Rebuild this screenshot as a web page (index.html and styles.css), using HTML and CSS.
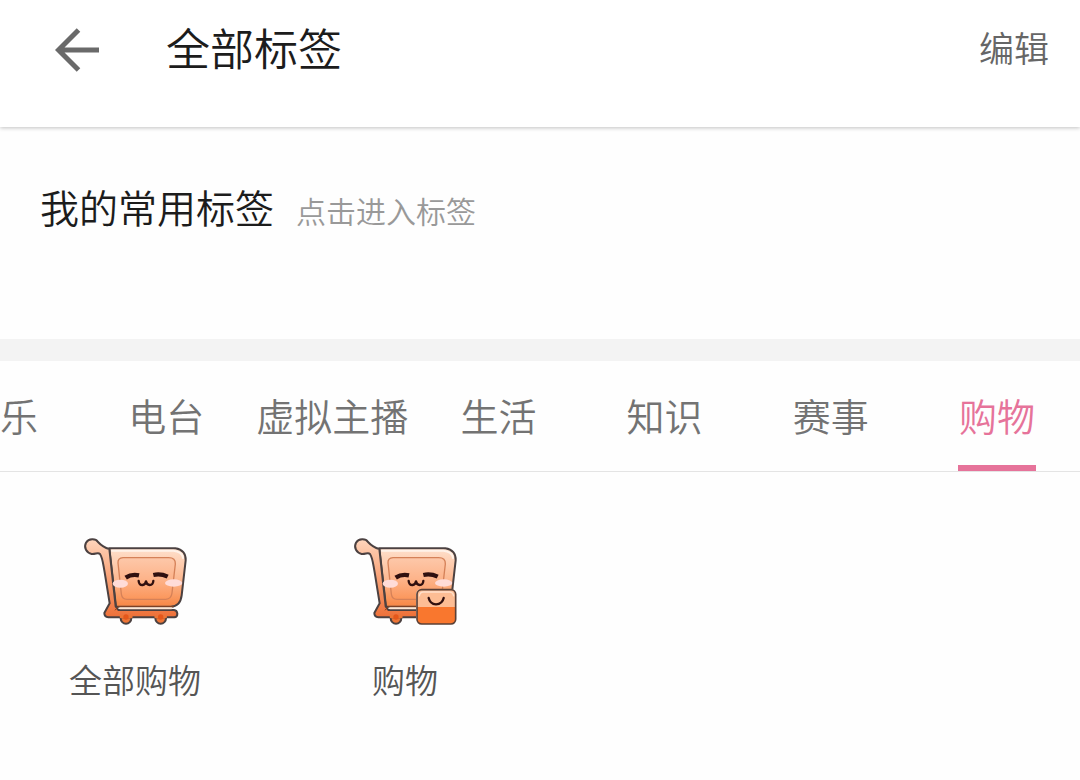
FILE: index.html
```html
<!DOCTYPE html>
<html lang="zh-CN">
<head>
<meta charset="utf-8">
<meta name="viewport" content="width=device-width, initial-scale=1">
<title>全部标签</title>
<link rel="stylesheet" href="styles.css">
</head>
<body>
<svg class="defs" aria-hidden="true">
  <defs>
    <linearGradient id="basket" x1="0" y1="0" x2="0" y2="1">
      <stop offset="0" stop-color="#ffe0cc"/>
      <stop offset=".55" stop-color="#fcb78f"/>
      <stop offset="1" stop-color="#f88643"/>
    </linearGradient>
    <linearGradient id="panel" x1="0" y1="0" x2="0" y2="1">
      <stop offset="0" stop-color="#fdc8aa"/>
      <stop offset=".5" stop-color="#fdb48b"/>
      <stop offset="1" stop-color="#fb965b"/>
    </linearGradient>
    <linearGradient id="handle" x1="0" y1="0" x2="0" y2="1">
      <stop offset="0" stop-color="#ffd6bd"/>
      <stop offset=".45" stop-color="#f9a67c"/>
      <stop offset="1" stop-color="#ee7038"/>
    </linearGradient>
    <g id="cart" stroke-linejoin="round" stroke-linecap="round">
      <path d="M118 70H316Q348 75 347 106L335 211Q331 244 302 245H138Z" fill="url(#basket)" stroke="#4b4141" stroke-width="6"/>
      <path d="M126 77H310Q337 80 339 99" fill="none" stroke="#fff2e9" stroke-width="6"/>
      <path d="M159 98H296Q317 98 316 117L306 204Q304 222 287 223H171Q156 223 154 207L144 114Q143 99 159 98Z" fill="url(#panel)" stroke="#d58158" stroke-width="4"/>
      <circle cx="168" cy="280" r="16" fill="#ed7536" stroke="#4b4141" stroke-width="6"/>
      <circle cx="272" cy="280" r="16" fill="#ed7536" stroke="#4b4141" stroke-width="6"/>
      <path d="M84 51C77 39 56 40 48 53C40 68 50 84 65 87C77 88 84 81 90 87C98 98 99 116 104 142L119 235L103 264Q103 276 115 277H313Q322 276 322 266Q321 256 312 255H145L137 244L118 72Q99 67 84 51Z" fill="url(#handle)" stroke="#4b4141" stroke-width="6"/>
      <path d="M136 255L144 245H310" fill="none" stroke="#87401f" stroke-width="3"/>
      <path d="M150 250H304" fill="none" stroke="#ffe6d3" stroke-width="6"/>
      <path d="M154 275H183M258 275H286" fill="none" stroke="#ed7536" stroke-width="10"/>
      <circle cx="168" cy="276" r="8" fill="#e5571b"/>
      <circle cx="272" cy="276" r="8" fill="#e5571b"/>
      <ellipse cx="151" cy="176" rx="23" ry="12" fill="#ffdcd8"/>
      <ellipse cx="311" cy="174" rx="26" ry="11" fill="#ffdcd8"/>
      <path d="M167 158Q185 146 207 151M250 150Q272 145 293 155" fill="none" stroke="#30100f" stroke-width="13" stroke-linecap="butt"/>
      <path d="M206 168Q207 181 218 180Q226 179 228 169Q230 180 239 180Q249 180 250 168" fill="none" stroke="#30100f" stroke-width="7"/>
    </g>
  </defs>
</svg>

<header class="topbar">
  <button class="back" type="button" aria-label="返回">
    <svg class="back-icon" viewBox="0 0 44 44" aria-hidden="true"><path d="M23.5 2 3.5 22l20 20M3.5 22H44" fill="none" stroke="#6a6a6a" stroke-width="5"/></svg>
  </button>
  <h1 class="title">全部标签</h1>
  <button class="edit" type="button">编辑</button>
</header>

<main>
  <section class="favorites">
    <h2 class="favorites-title">我的常用标签</h2>
    <p class="favorites-hint">点击进入标签</p>
  </section>

  <nav class="tabs">
    <a class="tab tab-edge" href="#ent">乐</a>
    <a class="tab" href="#radio">电台</a>
    <a class="tab" href="#virtual">虚拟主播</a>
    <a class="tab" href="#life">生活</a>
    <a class="tab" href="#knowledge">知识</a>
    <a class="tab" href="#match">赛事</a>
    <a class="tab" href="#shopping" aria-current="page"><span class="tab-active">购物</span></a>
  </nav>

  <div class="grid" id="shopping">
    <a class="tile" href="#all-shopping">
      <svg class="tile-icon" viewBox="0 0 390 330" aria-hidden="true"><use href="#cart"/></svg>
      <span>全部购物</span>
    </a>
    <a class="tile" href="#shop">
      <svg class="tile-icon" viewBox="0 0 390 330" aria-hidden="true">
        <use href="#cart"/>
        <path d="M228 302V210Q228 192 246 192H332Q350 192 350 210V302Z" fill="#fff"/>
        <rect x="231" y="194" width="116" height="103" rx="14" fill="#f9772e"/>
        <path d="M231 246V210Q231 194 246 194H332Q347 194 347 210V246Z" fill="#fdbd94"/>
        <rect x="231" y="194" width="116" height="103" rx="14" fill="none" stroke="#5b4036" stroke-width="5"/>
        <path d="M238 214Q239 201 250 201H329Q340 202 341 214" fill="none" stroke="#ffe0ca" stroke-width="4"/>
        <path d="M266 219Q270 237 288 238Q307 237 311 219" fill="none" stroke="#30100f" stroke-width="7" stroke-linecap="round"/>
      </svg>
      <span>购物</span>
    </a>
  </div>
</main>
</body>
</html>
```
FILE: styles.css
```css
* {
  box-sizing: border-box;
}

body {
  margin: 0;
  background: #fefefe;
  color: #1c1c1c;
  font-family: "Noto Sans CJK SC", "Noto Sans", sans-serif;
  font-weight: 350;
}

h1,
h2,
p {
  margin: 0;
  font-weight: inherit;
}

button {
  padding: 0;
  border: 0;
  background: none;
  font: inherit;
}

a {
  color: inherit;
  text-decoration: none;
}

.defs {
  position: absolute;
  width: 0;
  height: 0;
}

.topbar {
  display: flex;
  align-items: flex-end;
  padding: 15px 31px 48px 55px;
  background: #fff;
  box-shadow: 0 1px 4px rgba(0, 0, 0, 0.24);
}

.back {
  padding-bottom: 7px;
}

.back-icon {
  display: block;
  width: 44px;
  height: 44px;
}

.title {
  margin-left: 67px;
  font-size: 44px;
  line-height: 64px;
}

.edit {
  margin-left: auto;
  color: #666;
  font-size: 35px;
  line-height: 64px;
}

.favorites {
  display: flex;
  align-items: baseline;
  gap: 22px;
  padding: 51px 40px 105px;
  border-bottom: 22px solid #f3f3f3;
}

.favorites-title {
  font-size: 39px;
  line-height: 56px;
}

.favorites-hint {
  color: #999;
  font-size: 30px;
  line-height: 44px;
}

.tabs {
  display: flex;
  overflow: hidden;
  padding-bottom: 2px;
  border-bottom: 1px solid #e4e4e4;
  color: #737373;
  font-size: 38px;
  line-height: 108px;
  white-space: nowrap;
}

.tab {
  display: flex;
  flex: 2 0 0;
  justify-content: center;
}

.tab-edge {
  flex-grow: 1;
  justify-content: flex-start;
}

.tab-active {
  margin-bottom: -2px;
  padding: 0 1px;
  color: #e6739a;
  box-shadow: inset 0 -6px #e6739a;
}

.tabs,
.tab {
  align-items: stretch;
}

.grid {
  display: grid;
  grid-template-columns: repeat(4, 1fr);
  padding: 53px 0;
}

.tile {
  display: flex;
  flex-direction: column;
  align-items: center;
  gap: 20px;
  color: #555;
  font-size: 33px;
  line-height: 48px;
}

.tile-icon {
  width: 130px;
  height: 110px;
}
```
